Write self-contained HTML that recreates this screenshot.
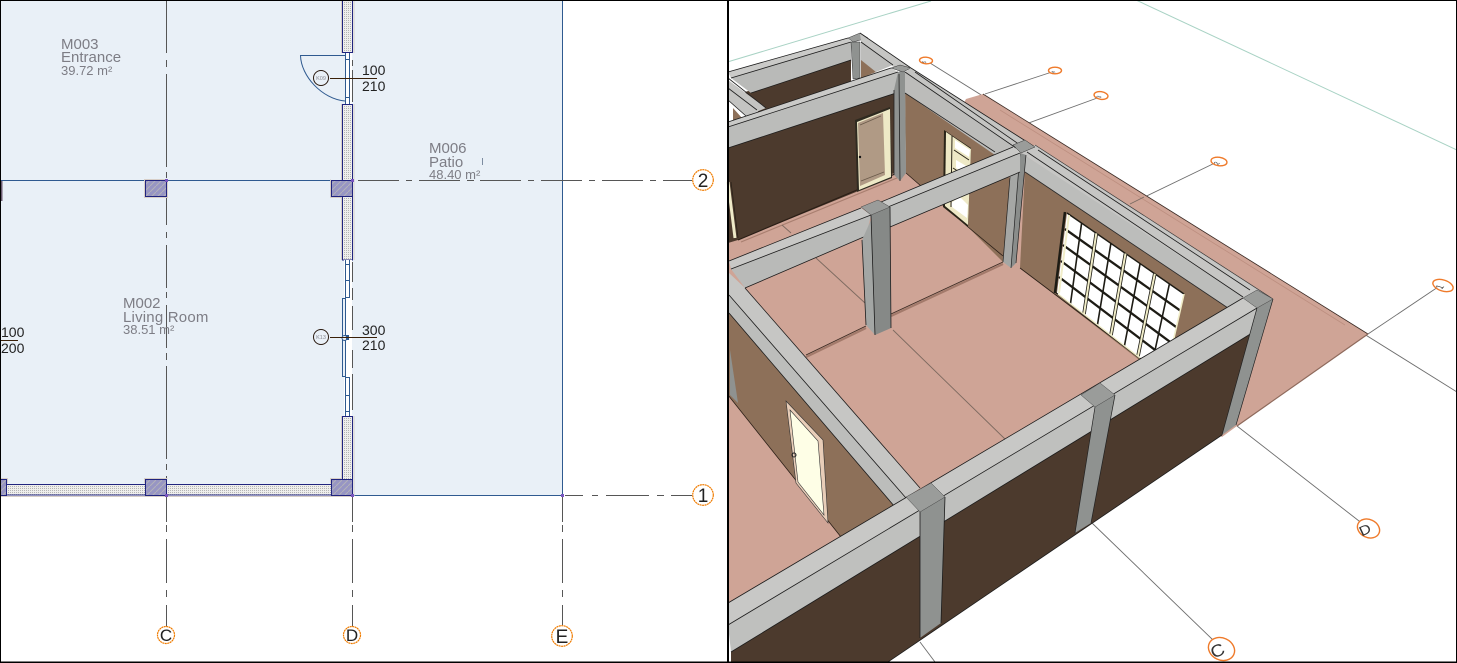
<!DOCTYPE html>
<html lang="en"><head><meta charset="utf-8"><title>Floor plan and 3D view</title>
<style>html,body{margin:0;padding:0;background:#fff;overflow:hidden}svg{display:block}text{font-family:"Liberation Sans",sans-serif}</style></head>
<body>
<svg width="1457" height="663" viewBox="0 0 1457 663" xmlns="http://www.w3.org/2000/svg">
<defs>
<pattern id="dot" width="2" height="2" patternUnits="userSpaceOnUse"><rect width="2" height="2" fill="#eeeeec"/><rect width="1" height="1" fill="#b4b4b4"/></pattern>
<pattern id="hat" width="6" height="6" patternUnits="userSpaceOnUse"><rect width="6" height="6" fill="#9795c3"/><path d="M0 6L6 0" stroke="#b3b2ba" stroke-width="1"/></pattern>
</defs>
<rect width="1457" height="663" fill="#fff"/>

<!-- PLAN -->
<rect x="1" y="1" width="561.5" height="494.5" fill="#e9f0f7"/>
<path d="M1 180.5H352M352 495.5H562.5M562.5 1V495.5" stroke="#2f5a90" fill="none"/>
<rect x="1" y="181" width="1.5" height="20" fill="#6a5a70"/>

<g fill="none" stroke="#565656">
<path d="M358 180.5H399M406 180.5H412M419 180.5H460M467 180.5H474M480 180.5H521M528 180.5H534M541 180.5H582M589 180.5H595M602 180.5H643M650 180.5H656M663 180.5H692"/>
<path d="M565 495.5H583M592 495.5H598M606 495.5H649M657 495.5H664M671 495.5H692"/>
<path d="M166.5 1V53M166.5 60V67M166.5 74V167M166.5 172V178M166.5 185V225M166.5 232V238M166.5 245V288M166.5 292V298M166.5 305V348M166.5 353V360M166.5 366V459M166.5 464V470M166.5 476V522M166.5 525V532M166.5 539V583M166.5 590V597M166.5 605V627"/>
<path d="M352.5 497V522M352.5 525V532M352.5 539V583M352.5 590V597M352.5 605V627"/>
<path d="M562.5 497V522M562.5 525V532M562.5 539V583M562.5 590V597M562.5 605V625"/>
</g>

<!-- wall halos -->
<g fill="none" stroke="#d8cfc8" stroke-width="1">
<path d="M341.5 0V53M354 0V53M341.5 104V180M354 104V197M341.5 197V260M354 197V260M341.5 416V479M354 416V496"/>
<rect x="144.5" y="179.5" width="23" height="18"/>
<path d="M0 478.5H7.5V483.5M144.5 483.5V478.5H167.5M330.5 483.5V478.5H341.5M0 496.5H353"/>
<path d="M330.5 197.5V179.5"/>
<path d="M330.5 197.5H341.5"/>
</g>
<!-- walls -->
<g fill="url(#dot)" stroke="#20247f">
<rect x="342.5" y="-2" width="10" height="54.5"/>
<rect x="342.5" y="104.5" width="10" height="92"/>
<rect x="342.5" y="196.5" width="10" height="63.5"/>
<rect x="342.5" y="416.5" width="10" height="64"/>
<rect x="6.5" y="484.5" width="139" height="10.5"/>
<rect x="166.5" y="484.5" width="165" height="10.5"/>
</g>
<g fill="url(#hat)" stroke="#20247f">
<rect x="331.5" y="180.5" width="21" height="16"/>
<rect x="145.5" y="180.5" width="21" height="16"/>
<rect x="145.5" y="479.5" width="21" height="16"/>
<rect x="331.5" y="479.5" width="21" height="16"/>
<rect x="-1" y="479.5" width="7.5" height="16"/>
</g>
<g fill="#7a55c0"><rect x="165" y="179" width="3" height="3"/><rect x="351" y="179" width="3" height="3"/><rect x="165" y="494" width="3" height="3"/><rect x="351" y="494" width="3" height="3"/><rect x="561" y="494" width="3" height="3"/></g>

<!-- door -->
<rect x="345" y="53" width="7" height="51" fill="#fff"/>
<g fill="none" stroke="#2f5a90">
<path d="M345.5 53V104M349.5 53V104M345.5 59.5H349.5M345.5 97.5H349.5"/>
<path d="M345 55.5H300.5C301 76 322 99 345 101"/>
</g>
<path d="M352.5 60V66M352.5 70V102" stroke="#565656" fill="none"/>
<path d="M330 78.5H377" stroke="#3a2008"/>
<circle cx="321" cy="78" r="7.5" fill="#e9f0f7" stroke="#2a1a10"/>
<text x="321" y="80" font-size="5.5" fill="#8a8a92" text-anchor="middle">K09</text>
<text x="362" y="75" font-size="14" fill="#222">100</text>
<text x="362" y="91" font-size="14" fill="#222">210</text>

<!-- window -->
<rect x="344" y="260" width="8" height="156" fill="#fff"/>
<g fill="none" stroke="#2f5a90">
<path d="M345.5 260V298M349.5 260V298M345.5 264.5H349.5M345.5 280.5H349.5M345.5 297.5H349.5"/>
<rect x="342.5" y="298.5" width="3" height="78" fill="#e9f0f7"/>
<path d="M345.5 377V416M349.5 377V416M345.5 377.5H349.5M345.5 395.5H349.5M345.5 411.5H349.5"/>
<circle cx="344.5" cy="338" r="2.5" fill="#e9f0f7"/>
</g>
<rect x="346" y="335" width="3" height="5" fill="#2f5a90"/>
<path d="M352.5 262V282M352.5 288V300M352.5 306V330M352.5 350V368M352.5 374V410" stroke="#565656" fill="none"/>
<path d="M330 337.5H377" stroke="#3a2008"/>
<circle cx="321" cy="337" r="7.5" fill="#e9f0f7" stroke="#2a1a10"/>
<text x="321" y="339" font-size="5.5" fill="#8a8a92" text-anchor="middle">K13</text>
<text x="362" y="335" font-size="14" fill="#222">300</text>
<text x="362" y="350" font-size="14" fill="#222">210</text>

<text x="1" y="337" font-size="14" fill="#222">100</text>
<text x="1" y="353" font-size="14" fill="#222">200</text>
<path d="M1 340.5H18" stroke="#3a2008"/>

<g fill="#7d7d85">
<text x="61" y="49" font-size="15">M003</text><text x="61" y="62" font-size="15">Entrance</text><text x="61" y="75" font-size="13">39.72 m²</text>
<text x="123" y="308" font-size="15">M002</text><text x="123" y="322" font-size="15" letter-spacing=".2">Living Room</text><text x="123" y="334" font-size="13">38.51 m²</text>
<text x="429" y="153" font-size="15">M006</text><text x="429" y="167" font-size="15">Patio</text><text x="429" y="179" font-size="13">48.40 m²</text>
</g>
<path d="M482.5 158V165" stroke="#7d8ca0"/>

<!-- grid bubbles -->
<g fill="#fff" stroke="#f07c00" stroke-width="1.200" stroke-dasharray="2 .5">
<circle cx="166" cy="635" r="8.5"/><circle cx="352" cy="635" r="8.5"/><circle cx="562" cy="636" r="10.3"/><circle cx="703" cy="495" r="10.3"/><circle cx="703" cy="180" r="10.3"/>
</g>
<g fill="#222" text-anchor="middle">
<text x="166" y="641" font-size="17">C</text><text x="352" y="641" font-size="17">D</text>
<text x="562" y="643" font-size="19">E</text><text x="703" y="502" font-size="19">1</text><text x="703" y="187" font-size="19">2</text>
</g>

<!-- 3D -->
<rect x="728" y="0" width="729" height="663" fill="#fff"/>
<path d="M729 61.5L931 1M1136 0L1457 150" stroke="#a8d2c4" fill="none"/>
<g stroke="#6e6e6e" fill="none" stroke-width=".9">
<path d="M930 63L1457 392M1055 71L985 94M1100 97L1015 128M1219 161L1130 204M1441 285L1368 334M1237 426L1368 528M1092 523L1213 640M920 642L935 662"/>
</g>

<!-- patio -->
<polygon points="966,99 983,94 1368,334 1237,426 1222,437 1030,300 960,110" fill="#cfa496"/>
<path d="M983,94L1368,334" stroke="#3a2a24" stroke-width=".8" fill="none"/>
<path d="M1368,334L1237,426" stroke="#8e6a5c" stroke-width="1.2" fill="none"/>
<path d="M1000,110L1345,325" stroke="#bd8f80" stroke-width=".8" fill="none"/>
<path d="M1130 204L1144 197" stroke="#7a6a62" fill="none" stroke-width=".8"/>

<!-- interior floor -->
<polygon points="728,210 900,150 1025,150 1243,300 920,512 728,622" fill="#cfa496"/>

<!-- walls -->
<polygon points="745,92 851,58 851,85 760,115" fill="#4c3a2d"/>
<polygon points="861,58 876,72 861,78" fill="#8d7059"/>
<polygon points="733,108 742,118 733,122" fill="#8d7059"/>
<polygon points="728,148 896,92 896,172 856,192 738,240 728,243" fill="#4c3a2d"/>
<path d="M738 240L895 174" stroke="#2a1e16" fill="none" stroke-width="1.2"/>
<path d="M741 242L897 178" stroke="#a97f70" fill="none" stroke-width="1.2"/>
<polygon points="905,92 1000,155 1010,180 1003,262 968,227 906,173" fill="#8d7059"/>
<path d="M906 173L968 227L1003 256" stroke="#2a1e16" fill="none" stroke-width=".8"/>
<polygon points="1025,170 1230,308 1175,345 1142,362 1020,268" fill="#8d7059"/>
<path d="M1020 268L1142 360" stroke="#2a1e16" fill="none" stroke-width=".8"/>
<polygon points="729,285 895,507 841,537 728,395" fill="#8d7059"/>
<path d="M728 395L841 537" stroke="#2a1e16" fill="none" stroke-width=".8"/>
<polygon points="730,350 738,403 730,395" fill="#8f9290"/>

<!-- floor lines -->
<g fill="none">
<path d="M782 225L791 233M816 258L865 303M893 330L1006 440" stroke="#7d6a60" stroke-width=".9"/>
<path d="M806 357L866 328M891 316L1003 264" stroke="#a37a6b" stroke-width="2.2"/>
<path d="M806 355L866 326M891 314L1003 262" stroke="#3a2a22" stroke-width=".9"/>
</g>

<!-- door back wall -->
<polygon points="855,120 890,107 892,178 857,192" fill="#2e2a20"/>
<polygon points="857,122 890,109 891,177 859,190" fill="#eee9c6"/>
<polygon points="858,123 883,113 885,175 860,186" fill="#b09a85"/>
<path d="M860 125L881 116M861 181L884 172" stroke="#6a5a4a" fill="none" stroke-width=".8"/>
<circle cx="860" cy="157" r="1.2" fill="#111"/>
<path d="M728 182L735 238" stroke="#efeac8" stroke-width="3" fill="none"/>
<path d="M731 182L738 238" stroke="#2a2218" fill="none" stroke-width=".8"/>

<!-- window side room -->
<polygon points="944,130 971,148 968,227 943,207" fill="#2a2418"/>
<polygon points="946,132 971,149 968,225 945,206" fill="#eee9c6"/>
<polygon points="955,140 970,150 969,157 955,148" fill="#fff"/>
<polygon points="956,160 968,167 968,175 956,168" fill="#fff"/>
<polygon points="951,203 960,197 968,205 967,218 952,207" fill="#fff"/>
<path d="M952 136L951 207M954 150L969 160M953 168L968 178" stroke="#2a2418" fill="none" stroke-width="1"/>

<!-- main window -->
<polygon points="1067,213 1184,294 1165,377 1057,293" fill="#fff"/>
<g fill="none" stroke="#1d1b14">
<g stroke-width="1.600">
<path d="M1081.600 223.100L1070.500 303.500M1110.900 243.400L1097.500 324.500M1140.100 263.600L1124.500 345.500M1169.400 283.900L1151.500 366.500"/>
</g>
<g stroke-width="2.300">
<path d="M1065 229L1180.200 310.600M1063 245L1176.400 327.200M1061 261L1172.600 343.800M1059 277L1168.800 360.400"/>
</g>
<path d="M1065 212L1055 293" stroke-width="2.600"/>
<path d="M1055 292L1142 360" stroke-width="1.200"/>
<path d="M1096.300 233.300L1084 314M1125.500 253.500L1111 335M1154.800 273.800L1138 356" stroke-width="3.600"/>
<path d="M1067 213L1184 294" stroke-width="1.400"/>
</g>
<g fill="none" stroke="#f1edc8">
<path d="M1069 215L1059 293" stroke-width="2"/>
<path d="M1096.300 233.300L1084 314M1125.500 253.500L1111 335M1154.800 273.800L1138 356" stroke-width="2"/>
<path d="M1184 294L1165 377" stroke-width="1.600"/>
<path d="M1058 294L1140 358" stroke-width="1.400"/>
</g>

<!-- far beams -->
<polygon points="728,72 848,38 851,42 731,78" fill="#cacac8"/>
<polygon points="731,78 851,42 851,60 751,93" fill="#b9bab8"/>
<path d="M728 72L848 38M731 78L851 42M751 93L851 60" stroke="#1c1c1c" stroke-width=".8" fill="none"/>
<polygon points="851,42 860,42 860,78 853,79" fill="#8f9290" stroke="#333" stroke-width=".5"/>
<polygon points="848,38 860,33 868,38 853,42" fill="#9a9c9a" stroke="#333" stroke-width=".5"/>
<polygon points="860,33 911,68 900,72 861,42" fill="#c6c6c4"/>
<polygon points="861,42 893,65 876,72 861,60" fill="#bdbdbb"/>
<path d="M860 33L911 68M861 42L893 65" stroke="#1c1c1c" stroke-width=".8" fill="none"/>
<polygon points="728,80 766,108 746,116 728,100" fill="#c4c4c2"/>
<path d="M728 88L757 110M728 78L766 108M728 100L746 116" stroke="#222" stroke-width=".8" fill="none"/>
<polygon points="728,122 891,68 898,72 728,127" fill="#cacac8"/>
<polygon points="728,127 898,72 896,93 728,148" fill="#bbbcba"/>
<path d="M728 122L891 68M728 127L898 72M728 148L896 93" stroke="#1c1c1c" stroke-width=".8" fill="none"/>
<polygon points="894,90 898,72 905,70 906,173 900,181 894,175" fill="#8f9290"/>
<path d="M899 74L900 181M894 90L894 175" stroke="#222" stroke-width=".8" fill="none"/>
<polygon points="891,68 900,65 911,68 903,72" fill="#9a9c9a" stroke="#333" stroke-width=".5"/>

<!-- side beam -->
<polygon points="911,68 1035,147 1020,153 905,72" fill="#c4c4c2"/>
<polygon points="905,72 1013,147 995,155 905,93" fill="#bcbcba"/>
<path d="M911 68L1035 147M905 72L1016 148M915 72L1020 145" stroke="#1c1c1c" stroke-width=".8" fill="none"/>
<path d="M905 93L995 152" stroke="#222" stroke-width=".8" fill="none"/>
<polygon points="1035,145 1273,299 1257,308 1021,153" fill="#c6c6c4"/>
<polygon points="1021,153 1243,297 1228,308 1025,172" fill="#bcbdbb"/>
<path d="M1035 145L1273 299" stroke="#3a3a3a" stroke-width=".7" fill="none"/>
<path d="M1027 152L1243 297M1038 150L1250 290" stroke="#1c1c1c" stroke-width=".8" fill="none"/>
<path d="M1025 172L1228 308" stroke="#2a2a2a" stroke-width=".8" fill="none"/>

<!-- column 1016 -->
<polygon points="1010,177 1020,153 1026,155 1016,263 1011,268 1003,262" fill="#a5a7a5"/>
<polygon points="1020,153 1026,155 1016,263 1011,268" fill="#8a8d8b"/>
<path d="M1010 177L1003 262M1020 153L1011 268M1026 155L1016 263" stroke="#222" stroke-width=".7" fill="none"/>

<!-- cross beam -->
<polygon points="1013,147 1021,153 888,207 881,202" fill="#c8c8c6"/>
<polygon points="1020,153 1020,172 890,227 888,207" fill="#bbbcba"/>
<path d="M1013 147L881 202M1020 153L888 207M1020 172L890 227" stroke="#1c1c1c" stroke-width=".8" fill="none"/>
<polygon points="729,261 861,208 871,215 731,269" fill="#c8c8c6"/>
<polygon points="731,269 871,215 866,236 745,288" fill="#b9bab8"/>
<path d="M729 261L861 208M731 269L871 215M745 288L866 236" stroke="#1c1c1c" stroke-width=".8" fill="none"/>
<polygon points="1013,145 1025,140 1035,147 1021,153" fill="#9a9c9a" stroke="#333" stroke-width=".5"/>

<!-- column 875 -->
<polygon points="862,240 871,220 875,335 866,325" fill="#a3a6a4"/>
<polygon points="871,215 890,207 891,328 875,335" fill="#868987"/>
<path d="M862 240L866 325M871 215L875 335M890 207L891 328" stroke="#1c1c1c" stroke-width=".8" fill="none"/>
<polygon points="861,207 878,200 890,207 871,215" fill="#9a9c9a" stroke="#444" stroke-width=".5"/>

<!-- left door -->
<polygon points="786,401 823,440 828,523 796,483" fill="#e8cdb8" stroke="#333" stroke-width=".6"/>
<polygon points="790,410 818,441 824,515 798,482" fill="#fefee6" stroke="#333" stroke-width=".6"/>
<circle cx="794" cy="455" r="2" fill="none" stroke="#222"/>

<!-- left diagonal beam -->
<polygon points="728,272 745,288 920,488 906,498 729,295" fill="#c6c6c4"/>
<polygon points="729,295 906,498 895,507 729,313" fill="#bcbdbb"/>
<path d="M745 288L920 488M729 295L906 498M729 313L895 507" stroke="#1c1c1c" stroke-width=".8" fill="none"/>

<!-- front wall & beam -->
<polygon points="731,652 1252,333 1222,435 888,662 731,662" fill="#4c3a2d"/>
<polygon points="728,603 1243,298 1257,308 728,625" fill="#c8c8c6"/>
<polygon points="728,625 1257,308 1252,333 731,652" fill="#bfc0be"/>
<path d="M728 603L1243 298M728 625L1257 308M731 652L1252 333" stroke="#1c1c1c" stroke-width=".8" fill="none"/>
<path d="M888 662L1222 435" stroke="#1c1c1c" stroke-width=".8" fill="none"/>

<!-- front columns -->
<polygon points="920,512 945,497 941,623 920,638" fill="#8f9290"/>
<path d="M920 512V638M945 497L941 623" stroke="#1c1c1c" stroke-width=".8" fill="none"/>
<polygon points="906,497 931,483 945,497 920,512" fill="#9a9c9a" stroke="#444" stroke-width=".5"/>
<polygon points="1095,407 1115,395 1091,523 1075,533" fill="#8f9290"/>
<path d="M1095 407L1075 533M1115 395L1091 523" stroke="#222" stroke-width=".7" fill="none"/>
<polygon points="1081,395 1100,383 1115,395 1095,407" fill="#9a9c9a" stroke="#444" stroke-width=".5"/>
<polygon points="1257,308 1273,299 1236,425 1222,435" fill="#8f9290"/>
<path d="M1257 308L1222 435M1273 299L1236 425" stroke="#222" stroke-width=".7" fill="none"/>
<polygon points="1243,298 1257,290 1273,299 1257,308" fill="#9a9c9a" stroke="#444" stroke-width=".5"/>

<!-- 3D bubbles -->
<g fill="#fff" stroke="#ef7a2a" stroke-width="1.400">
<ellipse cx="926" cy="60.500" rx="6.500" ry="3.300" transform="rotate(4 926 60.500)"/>
<ellipse cx="1055" cy="70.500" rx="6.500" ry="3.300"/>
<ellipse cx="1101" cy="95.500" rx="7" ry="3.800" transform="rotate(8 1101 95.500)"/>
<ellipse cx="1219" cy="161.500" rx="8" ry="4.200" transform="rotate(8 1219 161.500)"/>
<ellipse cx="1443" cy="285.500" rx="10.500" ry="5.500" transform="rotate(18 1443 285.500)"/>
<ellipse cx="1368.500" cy="528.500" rx="11.500" ry="9" transform="rotate(25 1368.500 528.500)"/>
<ellipse cx="1221.500" cy="649" rx="13.500" ry="11" transform="rotate(25 1221.500 649)"/>
</g>
<g fill="#333" text-anchor="middle">
<text transform="translate(926 62.500) scale(1 .5) rotate(-60)" font-size="6">5</text>
<text transform="translate(1055 72.500) scale(1 .5) rotate(-60)" font-size="6">4</text>
<text transform="translate(1101 97.500) scale(1 .5) rotate(-60)" font-size="7">3</text>
<text transform="translate(1219 164) scale(1 .55) rotate(-60)" font-size="8">2</text>
<text transform="translate(1443 288) scale(1 .6) rotate(-62)" font-size="11">1</text>
<text transform="translate(1367 534) rotate(-25) scale(1 .85)" font-size="16">D</text>
<text transform="translate(1220 656) rotate(-25) scale(1 .9)" font-size="19">C</text>
</g>

<!-- frame -->
<rect x="0" y="0" width="1457" height="1" fill="#000"/>
<rect x="0" y="0" width="1" height="663" fill="#000"/>
<rect x="727" y="0" width="2" height="663" fill="#000"/>
<rect x="1456" y="0" width="1" height="663" fill="#000"/>
<rect x="0" y="661.500" width="1457" height="1.500" fill="#000"/>
</svg>
</body></html>
